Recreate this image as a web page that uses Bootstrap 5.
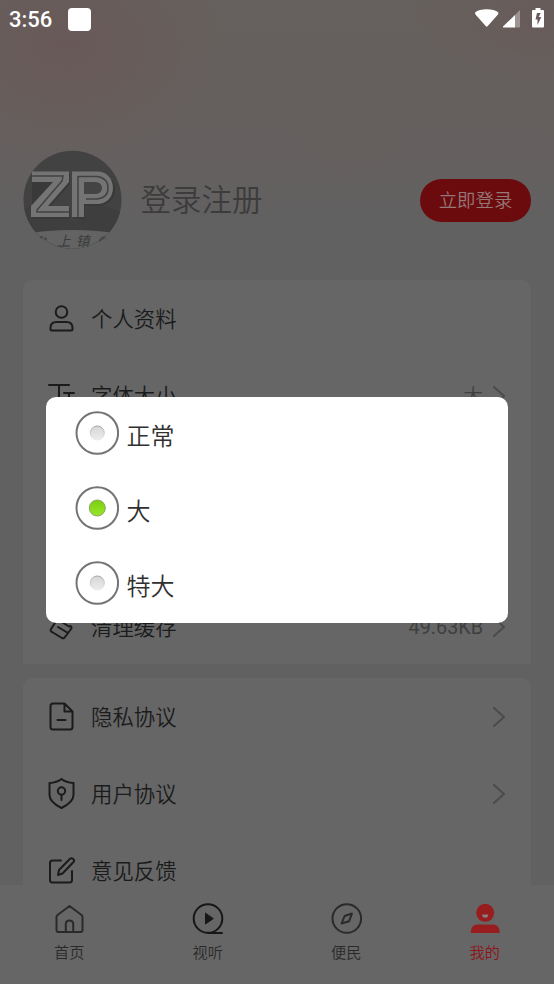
<!DOCTYPE html>
<html lang="zh-CN">
<head>
<meta charset="utf-8">
<meta name="viewport" content="width=device-width, initial-scale=1">
<title>我的</title>
<link rel="stylesheet" href="https://cdn.jsdelivr.net/npm/bootstrap@5.3.0/dist/css/bootstrap.min.css">
<style>
body{width:554px;height:984px;background:#616161;color:#1b1b1b;font-family:Roboto,"Noto Sans CJK SC",sans-serif;font-weight:400}
svg{display:block;flex:none}
.ln{fill:none;stroke:currentColor;stroke-width:2;stroke-linecap:round;stroke-linejoin:round}
.hero{height:280px;background:
 radial-gradient(ellipse 160px 110px at 65px 45px,#685957 0%,#68595799 50%,#68595700 100%),
 radial-gradient(ellipse 130px 70px at 540px 15px,#685b59 0%,#685b5900 100%),
 radial-gradient(ellipse 60px 60px at 350px 120px,#645e5c 0%,#645e5c00 100%),
 linear-gradient(#66615e 0,#65605f 150px,#616161 230px)}
.status{height:38px;padding:0 9px 0 9px;color:#fff}
.clock{font-size:22px;font-weight:500;line-height:38px;width:59px;padding-top:1px}
.sq{width:23px;height:23px;border-radius:4px;background:#fff}
.profile{margin-top:112px;height:100px;padding:0 23px 0 22.5px}
.login{font-size:30.5px;font-weight:350;color:#3c3c3c;line-height:44px;margin-left:19px;padding-top:2px}
.gobtn,.gobtn:hover{width:111px;height:43px;padding:0;background:#6c0b0e;color:#957878;font-size:18.4px;font-weight:350;line-height:43px;border:0}
.panel{margin:0 23px;background:#666}
.panel.first{height:384px;margin-bottom:14px;border-radius:9px 9px 0 0}
.panel.second{height:207px;border-radius:9px 9px 0 0;overflow:hidden}
.item{height:77.2px;padding:0 26px 0 24px}
.item .ic{width:29px;margin-right:15px}
.item .tx{font-size:21.4px;font-weight:350;line-height:30px;padding-top:2px}
.item .val{font-size:19.8px;color:#3f3f3f;margin-right:10px;line-height:30px;padding-top:2px}
.item .val.cjk{font-weight:350}
.chev{color:#4b4b4b}
.tabs{height:99px;background:#666;color:#2a2a2a;padding-top:17px}
.tabs .tb{width:138.5px}
.tabs .lb{font-size:15.2px;font-weight:350;line-height:22px;margin-top:6px}
.tabs .dark{color:#171717}
.tabs .me{color:#8e1419}
.dialogbox{left:46px;top:397px;width:462px;height:226px;border-radius:10px;background:#fff;padding:0 29px;color:#303030}
.opt{height:75.3px;font-size:24px;font-weight:350}
.opt svg{margin-bottom:4px}
.opt .tx{line-height:34px;margin-left:7.4px;padding-top:4px}
</style>
<script src="https://cdn.jsdelivr.net/npm/bootstrap@5.3.0/dist/js/bootstrap.bundle.min.js"></script>
</head>
<body class="m-0 overflow-hidden position-relative">
<header class="hero">
 <div class="status d-flex align-items-center">
  <span class="clock">3:56</span><span class="sq"></span>
  <div class="ms-auto d-flex align-items-center">
   <svg width="70" height="22" viewBox="0 0 70 22"><path fill="#fff" d="M0 4.500Q2 3 5 2.100Q11.700 .6 18.400 2.100Q21.400 3 23.400 4.500Q23.400 6 22.500 7L12.500 18.300Q11.700 19 10.900 18.300L.9 7Q0 6 0 4.500Z"/><path fill="#fff" fill-opacity=".35" d="M45 2V19.500H40V7Z"/><path fill="#fff" d="M28 19.500V18.500L40 7V19.500Z"/><path fill="#fff" fill-rule="evenodd" d="M60.500 0h5v2h2.500q1 0 1 1v15.500q0 1-1 1H58q-1 0-1-1V3q0-1 1-1h2.500ZM62 5l-1.500 6.500h2V17l3.800-8h-2.600l2-4Z"/></svg>
  </div>
 </div>
 <div class="profile d-flex align-items-center">
  <svg width="99" height="100" viewBox="0 0 99 100">
   <defs><clipPath id="av"><circle cx="49.500" cy="49.700" r="49"/></clipPath></defs>
   <g clip-path="url(#av)"><rect width="99" height="100" fill="#424242"/><path d="M0 60L20 50 35 63 52 72 70 52 99 62V100H0Z" fill="#3e3e3e"/><path d="M0 84Q49 76 99 84V101H0Z" fill="#636363"/></g>
   <path fill="#393939" d="M9 23.500H47V34L26 58H47V69H9ZM50 23.500H75C85 23.500 92 31 92 40C92 49 85 56 75 56H62V69H50Z"/>
   <path fill="#747474" d="M9 21.500H46V32L25 56H46V67H8V56L30 32H9ZM49 21.500H74C84 21.500 90 29 90 38C90 47 84 54 74 54H61V67H49Z"/>
   <path fill="none" stroke="#424242" stroke-width="1.500" d="M9 26H40L39 31L14 60V62H46M55 67V26.500H74Q85 28 85 38Q85 48 74 49H63"/>
   <path fill="#444" d="M61 32H73Q79 33 79 38Q79 43 73 44H61Z"/>
   <g font-family="Liberation Serif,Noto Sans CJK SC,serif" font-size="13.500" font-style="italic" font-weight="400" fill="#3a3a3a"><text x="34" y="96">上</text><text x="53" y="96">镇</text></g>
   <path stroke="#474747" stroke-width="2" stroke-dasharray="3 1.500" fill="none" d="M17 87l5 1 2 3M76 91l5-4 2-1M78 88l5 1"/>
  </svg>
  <span class="login">登录注册</span>
  <button class="btn rounded-pill gobtn ms-auto">立即登录</button>
 </div>
</header>

<main>
 <section class="panel first">
  <div class="item d-flex align-items-center"><div class="ic"><svg width="29" height="29" viewBox="0 0 29 29" class="ln"><circle cx="14.500" cy="8" r="5.800"/><path d="M9.500 18H19.500Q25.500 18 25.500 24V25Q25.500 26.500 24 26.500H5Q3.500 26.500 3.500 25V24Q3.500 18 9.500 18Z"/></svg></div><span class="tx">个人资料</span></div>
  <div class="item d-flex align-items-center"><div class="ic"><svg width="29" height="29" viewBox="0 0 29 29" class="ln"><path d="M2 4H22M12 4V25M17 12H27M22 12V25"/></svg></div><span class="tx">字体大小</span><span class="val cjk ms-auto">大</span><svg class="ln chev" width="12" height="20" viewBox="0 0 12 20"><path d="M1 1L11 10 1 19"/></svg></div>
  <div class="item"></div>
  <div class="item"></div>
  <div class="item d-flex align-items-center"><div class="ic"><svg width="29" height="29" viewBox="0 0 29 29" class="ln"><path d="M8 5L22 13.500M8 10L4 16Q3 18 5 19L15 25Q17 26 18 24L24 16Q25.500 14 23 13M11 14L21 20"/></svg></div><span class="tx">清理缓存</span><span class="val ms-auto">49.63KB</span><svg class="ln chev" width="12" height="20" viewBox="0 0 12 20"><path d="M1 1L11 10 1 19"/></svg></div>
 </section>
 <section class="panel second">
  <div class="item d-flex align-items-center"><div class="ic"><svg width="29" height="29" viewBox="0 0 29 29" class="ln"><path d="M6 1.500H17.500L25.500 9.500V25Q25.500 27.500 23 27.500H6Q3.500 27.500 3.500 25V4Q3.500 1.500 6 1.500ZM17.500 2V9.500H25M10.500 18H18.500"/></svg></div><span class="tx">隐私协议</span><svg class="ln chev ms-auto" width="12" height="20" viewBox="0 0 12 20"><path d="M1 1L11 10 1 19"/></svg></div>
  <div class="item d-flex align-items-center"><div class="ic"><svg width="29" height="31" viewBox="0 0 29 31" class="ln"><path d="M14.500 1Q19 4.500 26.500 5V17Q26.500 24 14.500 30Q2.500 24 2.500 17V5Q10 4.500 14.500 1Z"/><circle cx="14.500" cy="13" r="3.700"/><path d="M14.500 17V22"/></svg></div><span class="tx">用户协议</span><svg class="ln chev ms-auto" width="12" height="20" viewBox="0 0 12 20"><path d="M1 1L11 10 1 19"/></svg></div>
  <div class="item d-flex align-items-center"><div class="ic"><svg width="29" height="29" viewBox="0 0 29 29" class="ln"><path d="M14 4.500H5.500Q3 4.500 3 7V24Q3 26.500 5.500 26.500H22.500Q25 26.500 25 24V15M11 19L12 14 23 2.800Q24.500 1.500 26.200 3Q27.800 4.500 26.500 6L15.500 17.500Z"/></svg></div><span class="tx">意见反馈</span></div>
 </section>
</main>

<nav class="tabs d-flex">
 <div class="tb d-flex flex-column align-items-center"><svg width="34" height="34" viewBox="0 0 34 34" class="ln"><path d="M17.500 4L29.500 13Q30.500 14 30.500 15V28Q30.500 30 28.500 30H6.500Q4.500 30 4.500 28V15Q4.500 14 5.500 13ZM13.800 29.500V22Q13.800 18.500 17.500 18.500Q21.200 18.500 21.200 22V29.500"/></svg><span class="lb">首页</span></div>
 <div class="tb d-flex flex-column align-items-center"><svg width="34" height="34" viewBox="0 0 34 34" class="ln dark"><circle cx="17" cy="16.500" r="14.300"/><path d="M17 31H31"/><path d="M14.500 11.500V22L22 16.800Z" fill="currentColor" stroke-width="1"/></svg><span class="lb">视听</span></div>
 <div class="tb d-flex flex-column align-items-center"><svg width="34" height="34" viewBox="0 0 34 34" class="ln"><circle cx="17.800" cy="16.500" r="14.300"/><path d="M23 11.500L20.100 19.200 12.600 21.500 15.600 14Z"/></svg><span class="lb">便民</span></div>
 <div class="tb me d-flex flex-column align-items-center"><svg width="34" height="34" viewBox="0 0 34 34"><g fill="#981d1f"><circle cx="17.200" cy="10.800" r="9"/><path d="M9 22.500H25.500Q31.800 23 31.800 31H2.700Q2.700 23 9 22.500Z"/></g><path fill="#858080" d="M14.200 12.500H20.200Q20.200 15.800 17.200 15.800Q14.200 15.800 14.200 12.500Z"/></svg><span class="lb">我的</span></div>
</nav>

<div class="dialogbox position-absolute" role="dialog">
 <svg width="0" height="0" class="position-absolute"><defs>
  <linearGradient id="off" x1="0" y1="0" x2="0" y2="1"><stop offset="0" stop-color="#d6d6d6"/><stop offset="1" stop-color="#ececec"/></linearGradient>
  <linearGradient id="rim" x1="0" y1="0" x2="0" y2="1"><stop offset="0" stop-color="#a2a2a2"/><stop offset="1" stop-color="#eee"/></linearGradient>
  <linearGradient id="on" x1="0" y1="0" x2="0" y2="1"><stop offset="0" stop-color="#79cf10"/><stop offset="1" stop-color="#99e529"/></linearGradient></defs></svg>
 <div class="opt d-flex align-items-center"><svg width="44" height="44" viewBox="0 0 44 44"><circle cx="22.300" cy="22" r="20.800" fill="#fff" stroke="#747474" stroke-width="2"/><circle cx="22.300" cy="22" r="7" fill="url(#off)" stroke="url(#rim)"/></svg><span class="tx">正常</span></div>
 <div class="opt d-flex align-items-center"><svg width="44" height="44" viewBox="0 0 44 44"><circle cx="22.300" cy="22" r="20.800" fill="#fff" stroke="#747474" stroke-width="2"/><circle cx="22.300" cy="22" r="8" fill="url(#on)" stroke="#88a565"/></svg><span class="tx">大</span></div>
 <div class="opt d-flex align-items-center"><svg width="44" height="44" viewBox="0 0 44 44"><circle cx="22.300" cy="22" r="20.800" fill="#fff" stroke="#747474" stroke-width="2"/><circle cx="22.300" cy="22" r="7" fill="url(#off)" stroke="url(#rim)"/></svg><span class="tx">特大</span></div>
</div>
</body>
</html>
